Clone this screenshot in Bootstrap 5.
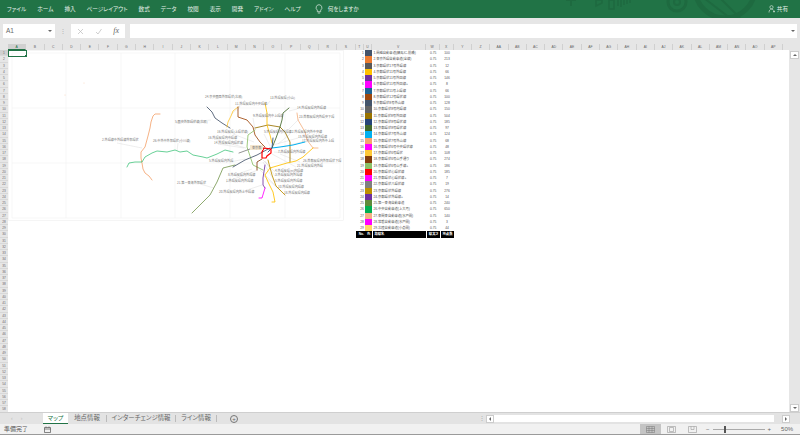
<!DOCTYPE html>
<html lang="ja">
<head>
  <title>Excel マップ</title>
  <meta charset="UTF-8" />
  <meta name="viewport" content="width=device-width, initial-scale=1" />
  <link href="https://cdn.jsdelivr.net/npm/bootstrap@5.3.0/dist/css/bootstrap.min.css" rel="stylesheet" />
  <style>
    html, body { height: 435px; overflow: hidden; }
    body { background: #e6e6e6; font-family: "Liberation Sans", "Noto Sans CJK JP", sans-serif; color: #444; font-feature-settings: "palt"; }
    .xl-app { height: 435px; }

    .xl-ribbon { height: 18px; background: #217346; color: #e4efe8; font-size: 5.6px; padding-left: 7px; gap: 11px; }
    .xl-ribbon span { white-space: nowrap; }
    .xl-bulb { margin-left: 3px; }
    .xl-ask { margin-left: -6px; }
    .xl-deco { left: 540px; top: 0; }
    .xl-share { right: 12px; top: 5px; gap: 1px; font-size: 5.6px; }

    .xl-fbar { height: 26px; padding: 6px 3px 6px 3px; gap: 0; }
    .xl-namebox { width: 52px; height: 14px; background: #fff; font-size: 6.5px; color: #666; padding: 0 3px; }
    .xl-sep { width: 16px; color: #aaa; font-size: 6px; }
    .xl-fbtns { width: 54px; height: 14px; background: #fff; padding: 0 6px; color: #999; }
    .xl-fx { font-family: "Liberation Serif", serif; font-style: italic; font-size: 8px; color: #666; }
    .xl-input { height: 14px; background: #fff; margin-left: 5px; padding-right: 2px; }
    .xl-caret { width: 0; height: 0; border-left: 2px solid transparent; border-right: 2px solid transparent; border-top: 2px solid #666; }

    .xl-colhead { height: 6px; padding-left: 8px; font-size: 3.4px; color: #666; line-height: 6px; }
    .xl-col { text-align: center; flex: none; border-right: 1px solid #d0d0d0; height: 6px; }
    .xl-col-on { background: #d0d0d0; border-bottom: 1px solid #217346; color: #217346; }

    .xl-sheet { height: 362px; overflow: hidden; }
    .xl-rowhead { width: 8px; flex: none; font-size: 3.2px; color: #666; }
    .xl-rownum { height: 6.25px; line-height: 6.25px; text-align: center; border-bottom: 1px solid #d8d8d8; }
    .xl-rownum-on { background: #d0d0d0; }
    .xl-cells { background: #fff; width: 781px; flex: none; }
    .xl-left { width: 348px; flex: none; }
    .xl-map { display: block; width: 336px; height: 172px; }
    .xl-map text { font-size: 3.1px; fill: #777; font-family: "Noto Sans CJK JP", sans-serif; }
    .xl-cursor { left: 0; top: 0; width: 19px; height: 7px; border: 1px solid #217346; }
    .xl-handle { right: -1px; bottom: -1px; width: 2px; height: 2px; background: #217346; }

    .xl-data { font-size: 3.3px; color: #555; width: 98px; flex: none; }
    .xl-line { height: 6.25px; line-height: 6.25px; white-space: nowrap; }
    .xl-no { width: 9px; text-align: right; padding-right: 1px; }
    .xl-swatch { width: 7.5px; height: 6.25px; }
    .xl-name { width: 54px; padding-left: 1px; overflow: hidden; }
    .xl-num { width: 14px; text-align: center; }
    .xl-line-head { background: #000; color: #fff; font-weight: 700; gap: 0; margin-left: 0; }
    .xl-line-head .xl-name, .xl-line-head .xl-num { border-left: 1px solid #fff; }

    .xl-vscroll { width: 11px; flex: none; padding: 1px 1px 0 1px; }
    .xl-vbtn { height: 8px; background: #fff; border: 1px solid #ccc; }
    .xl-up { width: 0; height: 0; border-left: 2px solid transparent; border-right: 2px solid transparent; border-bottom: 2px solid #666; }

    .xl-tabs { height: 12px; font-size: 6.4px; color: #666; background: #e3e3e3; border-top: 1px solid #cfcfcf; }
    .xl-tabnav { width: 43px; flex: none; color: #bbb; font-size: 5px; gap: 8px; padding-left: 11px; }
    .xl-tab { height: 11px; white-space: nowrap; line-height: 10px; text-align: center; flex: none; }
    .xl-tab-a { width: 38px; }
    .xl-tab-b { width: 68px; }
    .xl-tab-c { width: 40px; }
    .xl-tab-div { border-right: 1px solid #bbb; height: 7px; width: 1px; flex: none; }
    .xl-tab-on { background: #fff; color: #217346; border-bottom: 1px solid #217346; width: 25px; font-size: 6px; }
    .xl-plus { width: 8px; height: 8px; border: 1px solid #777; border-radius: 50%; margin-left: 13px; font-size: 6px; line-height: 6px; text-align: center; flex: none; }
    .xl-dots { margin-left: 240px; color: #aaa; font-size: 6px; width: 8px; flex: none; }
    .xl-hbtn { width: 8px; height: 8px; background: #fff; border: 1px solid #ccc; flex: none; }
    .xl-hscroll { height: 7px; background: #fff; width: 280px; flex: none; }
    .xl-left-arrow { width: 0; height: 0; border-top: 2px solid transparent; border-bottom: 2px solid transparent; border-right: 2px solid #666; }
    .xl-right { width: 0; height: 0; border-top: 2px solid transparent; border-bottom: 2px solid transparent; border-left: 2px solid #666; }

    .xl-status { height: 11px; font-size: 6px; color: #555; background: #f1f1f1; border-bottom: 1px solid #9a9a9a; padding-left: 4px; }
    .xl-view { width: 21px; height: 10px; flex: none; }
    .xl-view-on { background: #c4c4c4; margin-left: 589px; }
    .xl-zoomrow { gap: 3px; margin-left: 3px; color: #666; }
    .xl-slider { width: 52px; height: 1px; background: #aaa; flex: none; }
    .xl-thumb { left: 11px; top: -3px; width: 2px; height: 7px; background: #555; }
    .xl-pct { margin-left: 7px; }
  </style>
</head>
<body>
<div class="xl-app d-flex flex-column">

  <div class="xl-ribbon d-flex align-items-center position-relative overflow-hidden">
    <span>ファイル</span><span>ホーム</span><span>挿入</span><span>ページレイアウト</span><span>数式</span><span>データ</span><span>校閲</span><span>表示</span><span>開発</span><span>アドイン</span><span>ヘルプ</span>
    <svg width="8" height="10" viewBox="0 0 8 10" class="xl-bulb"><path d="M4 .7a3 3 0 0 0-1.7 5.4V7.7h3.4V6.1A3 3 0 0 0 4 .7zM2.8 9h2.4" fill="none" stroke="#e4efe8" stroke-width=".7"/></svg>
    <span class="xl-ask">何をしますか</span>
    <svg class="xl-deco position-absolute" width="260" height="18" viewBox="540 0 260 18" fill="none" stroke="#1e6a40">
      <path d="M571 0v6M566 0h10" stroke-width="2"/>
      <path d="M596 0v6l6-3V0zM609 0v9h5V0zM618 0v6M621 0v7M624 0v5M627 0v4M630 0v3" stroke-width="1.6"/>
      <circle cx="677" cy="2" r="9" stroke-width="3"/><circle cx="677" cy="2" r="3" stroke-width="2"/>
      <circle cx="725" cy="-12" r="30" stroke-width="5"/>
      <path d="M700 -5l30 23M712 -10l28 28" stroke-width="2"/>
    </svg>
    <div class="xl-share position-absolute d-flex align-items-center">
      <svg width="8" height="8" viewBox="0 0 8 8"><circle cx="3.5" cy="2.2" r="1.6" fill="none" stroke="#e4efe8" stroke-width=".6"/><path d="M1 7.5c0-2 1-3.4 2.5-3.4 1 0 1.8.5 2.2 1.4M6 5.5v2M5 6.5h2" fill="none" stroke="#e4efe8" stroke-width=".6"/></svg>
      <span>共有</span>
    </div>
  </div>

  <div class="xl-fbar d-flex align-items-center">
    <div class="xl-namebox d-flex align-items-center justify-content-between"><span>A1</span><span class="xl-caret"></span></div>
    <div class="xl-sep text-center">⋮</div>
    <div class="xl-fbtns d-flex align-items-center justify-content-between">
      <svg width="7" height="7" viewBox="0 0 7 7"><path d="M1 1l5 5M6 1L1 6" stroke="#bbb" stroke-width=".7"/></svg>
      <svg width="7" height="7" viewBox="0 0 7 7"><path d="M1 4l2 2 3.500-5" fill="none" stroke="#bbb" stroke-width=".7"/></svg>
      <span class="xl-fx">fx</span>
    </div>
    <div class="xl-input flex-grow-1 d-flex align-items-center justify-content-end"><span class="xl-caret"></span></div>
  </div>

  <div class="xl-colhead d-flex" id="colHead"></div>

  <div class="xl-sheet d-flex">
    <div class="xl-rowhead" id="rowHead"></div>
    <div class="xl-cells d-flex position-relative">
      <div class="xl-left">
        <svg class="xl-map" viewBox="8 50 336 172">
          <g fill="none" stroke="#ececec" stroke-width=".5">
            <rect x="8.500" y="50.500" width="335" height="170"/>
            <path d="M12 53H340V218H12ZM66 53V218M121 53V218M175 53V218M230 53V218M285 53V218M12 108H340M12 163H340"/>
          </g>
          <g fill="none" stroke="#bbb" stroke-width=".25">
            <path d="M176 123l35-3M117 143l25 5M178 143l-1 8M245 100l-13 14M240 106l-3 5M270 101l-3 4M297 109l-8 2M253 118l2 12M299 119l-12 12M233 134l21 8M264 134l6 12M290 134l-12 10M214 139l32 9M298 138l-25 7M218 144l26 4M302 142l-20 5M288 153l-14-1M300 162l-20-8M296 167l-24-13M230 162l15-3M232 176l20-7M226 182l32-12M275 172l-12-12M275 176l-10-15M275 182l-12-20M278 188l-18-18M238 193l24-8M284 194l-20-18M200 184l14 4"/>
          </g>
          <g fill="none" stroke-linecap="round" stroke-linejoin="round" stroke-width=".85">
            <path stroke="#f4a46f" d="M160 114L155 114 153 116 151 122 150 128 148 136 145 147 141 152 141 158 142 163 143 169 145 173 149 176 152 180"/>
            <path stroke="#00b050" stroke-opacity=".7" d="M127 167L129 163 135 162 142 162 145 157 152 153 157 151 167 152 175 150 180 152 187 151 193 155 203 157 207 158 217 154 225 150 233 152"/>
            <path stroke="#44546a" d="M207 107L212 112 215 118 222 123 230 128"/>
            <path stroke="#ffc838" d="M238 107L233 111 231 116 228 122 227 127"/>
            <path stroke="#9e480e" d="M238 107L238 117 247 120 253 127 255 135 260 142 265 147"/>
            <path stroke="#997300" d="M255 128L268 125 280 127 285 132 290 142 290 152 290 162"/>
            <path stroke="#ffc000" d="M265 103L267 113 267 125 270 135 272 143"/>
            <path stroke="#43682b" d="M289 108L283 113 282 120 280 127 276 138 272 148"/>
            <path stroke="#00b0f0" stroke-width="1" d="M272 148L280 147 293 145 305 142"/>
            <path stroke="#264478" d="M273 138L272 148 268 152"/>
            <path stroke="#f4b183" d="M297 113L298 120 305 132 307 140 313 148 318 148"/>
            <path stroke="#ffc000" d="M313 148L303 157 296 161 287 163 270 168 265 175 268 182 273 192 275 202 272 202"/>
            <path stroke="#7030a0" d="M265 165L263 178 263 185 265 188"/>
            <path stroke="#ff00ff" d="M265 188L262 198 259 198"/>
            <path stroke="#8cc168" d="M255 130L248 135 247 147 253 165 263 170"/>
            <path stroke="#7a9a55" d="M235 165L223 168 217 182 210 195 200 205 192 213"/>
            <path stroke="#44546a" d="M233 167L245 160 257 155 270 148"/>
            <path stroke="#7f7f7f" d="M239 153L250 149 262 148 270 149"/>
            <path stroke="#843c0c" d="M257 170L257 162 262 159"/>
            <path stroke="#bf9000" d="M268 160L272 175 276 186 285 195"/>
            <path stroke="#ff0000" stroke-width="1.200" stroke-linejoin="miter" d="M264 148L271 149 271 153 267 156 266 158 262 158 262 152Z"/>
          </g>
          <circle cx="84" cy="83" r=".4" fill="#f4b183"/><circle cx="65" cy="95" r=".4" fill="#f4b183"/>
          <rect x="250" y="145" width="13" height="5" fill="#f3e6cf"/>
          <text x="252" y="148.500">東京都</text>
          <text x="205" y="98">24.京央圏西外郭環状(北部)</text>
          <text x="270" y="99">13.外環反環(小山)</text>
          <text x="235" y="105">11.外環反環内中央環線</text>
          <text x="297" y="109">14.外環反環内外環線</text>
          <text x="253" y="117">9.外環反環内中上環線</text>
          <text x="299" y="118">23.首都反環内外環央下環</text>
          <text x="175" y="123">5.圏央外郭環状線(北部)</text>
          <text x="290" y="133">12.外環反環内外中央線</text>
          <text x="217" y="133">16.外環反環(上環状線)</text>
          <text x="264" y="133">5.外環反環内外環線</text>
          <text x="208" y="139">16.外環反環内中環線</text>
          <text x="298" y="138">15.外環反環内外環線</text>
          <text x="302" y="142">17.外環反環内外中上環</text>
          <text x="214" y="144">14.外環反環内環状線</text>
          <text x="102" y="141">2.外環線中外環線外郭環状</text>
          <text x="153" y="142">26.中外中外郭環状(小川線)</text>
          <text x="278" y="153">7.外環反環内外環線</text>
          <text x="303" y="162">26.首都反環内外郭環状下環</text>
          <text x="297" y="167">21.外環反環内外環</text>
          <text x="209" y="162">5.外環反環内外環</text>
          <text x="275" y="172">4.外環反環(n)内環線</text>
          <text x="228" y="176">8.外環反環内外環線</text>
          <text x="275" y="176">3.外環反環内外環線</text>
          <text x="226" y="182">1.外環反環内外環線</text>
          <text x="275" y="182">5.外環反環内外環線</text>
          <text x="278" y="188">10.外環反環内環線</text>
          <text x="219" y="193">20.外環反環内外上中環線</text>
          <text x="284" y="194">18.外環反環内環線</text>
          <text x="177" y="184">21.第一東海外郭環状</text>
        </svg>
      </div>
      <div class="xl-data" id="dataTable"></div>
      <div class="xl-cursor position-absolute"><div class="xl-handle position-absolute"></div></div>
    </div>
    <div class="xl-vscroll d-flex flex-column justify-content-between">
      <div class="xl-vbtn d-flex align-items-center justify-content-center"><span class="xl-up"></span></div>
      <div class="xl-vbtn d-flex align-items-center justify-content-center"><span class="xl-caret"></span></div>
    </div>
  </div>

  <div class="xl-tabs d-flex align-items-center">
    <div class="xl-tabnav d-flex"><span>‹</span><span>›</span></div>
    <div class="xl-tab xl-tab-on">マップ</div>
    <div class="xl-tab xl-tab-a">地点情報</div><div class="xl-tab-div"></div>
    <div class="xl-tab xl-tab-b">インターチェンジ情報</div><div class="xl-tab-div"></div>
    <div class="xl-tab xl-tab-c">ライン情報</div><div class="xl-tab-div"></div>
    <div class="xl-plus">+</div>
    <div class="xl-dots text-center">⋮</div>
    <div class="xl-hbtn d-flex align-items-center justify-content-center"><span class="xl-left-arrow"></span></div>
    <div class="xl-hscroll"></div>
    <div class="xl-hbtn ms-2 d-flex align-items-center justify-content-center"><span class="xl-right"></span></div>
  </div>

  <div class="xl-status d-flex align-items-center">
    <span>準備完了</span>
    <svg width="7" height="7" viewBox="0 0 7 7" class="ms-3"><path d="M.5 1.500h6v5h-6zM.5 3h6M2 .5v1M5 .5v1" fill="none" stroke="#555" stroke-width=".7"/></svg>
    <div class="xl-view xl-view-on d-flex align-items-center justify-content-center">
      <svg width="9" height="7" viewBox="0 0 9 7"><path d="M.5.500h8v6h-8zM.5 2.500h8M.5 4.500h8M3 .5v6M6 .5v6" fill="none" stroke="#777" stroke-width=".5"/></svg>
    </div>
    <div class="xl-view d-flex align-items-center justify-content-center">
      <svg width="9" height="7" viewBox="0 0 9 7"><path d="M.5.500h8v6h-8zM2.500 1.500h4v4h-4z" fill="none" stroke="#888" stroke-width=".5"/></svg>
    </div>
    <div class="xl-view d-flex align-items-center justify-content-center">
      <svg width="9" height="7" viewBox="0 0 9 7"><path d="M.5.500h8v6h-8zM3 .5v3h3v-3" fill="none" stroke="#888" stroke-width=".5"/></svg>
    </div>
    <div class="xl-zoomrow d-flex align-items-center">
      <span>−</span>
      <div class="xl-slider position-relative"><div class="xl-thumb position-absolute"></div></div>
      <span>+</span>
      <span class="xl-pct">50%</span>
    </div>
  </div>
</div>

<script>
  // column headers: A-S, the narrow table columns, then the rest up to AP
  const letters = "ABCDEFGHIJKLMNOPQRS".split("");
  const cols = letters.map(c => [c, 18.3]);
  cols.push(["T", 8.5], ["U", 7.5], ["V", 54], ["W", 14], ["X", 14], ["Y", 18.3], ["Z", 18.3]);
  "ABCDEFGHIJKLMNOP".split("").forEach(c => cols.push(["A" + c, 18.3]));
  const colHead = document.getElementById("colHead");
  cols.forEach((c, i) => {
    colHead.innerHTML += `<div class="xl-col ${i === 0 ? "xl-col-on" : ""}" style="width:${c[1]}px">${c[0]}</div>`;
  });

  const rowHead = document.getElementById("rowHead");
  for (let i = 1; i <= 58; i++) {
    rowHead.innerHTML += `<div class="xl-rownum ${i === 1 ? "xl-rownum-on" : ""}">${i}</div>`;
  }

  const rows = [
    ["#44546a", "1.関越自動車道(練馬IC-前橋)", 100], ["#ed7d31", "2.東京外環自動車道(全線)", 213],
    ["#595959", "3.京都環状17号外環線", 12], ["#ffc000", "4.京都環状11号外環線", 66],
    ["#7030a0", "5.京都環状11号外回線", 146], ["#ff00ff", "6.京都環状11号外回線+", 8],
    ["#1f6391", "7.京都環状11号上環線", 66], ["#9e480e", "8.京都環状12号環状線", 100],
    ["#44546a", "9.京都環状8号外山線", 128], ["#636363", "10.京都環状8号内環線", 150],
    ["#997300", "11.京都環状8号外回線", 504], ["#264478", "12.京都環状8号環状線", 185],
    ["#43682b", "13.京都環状8号環状線", 97], ["#00b0f0", "14.京都環状7号外山線", 124],
    ["#f4a46f", "15.京都環状7号外山線", 68], ["#ff00ff", "16.京都環状6号中央環状線", 48],
    ["#ffc838", "17.京都環状6号環状", 108], ["#843c0c", "18.京都環状6号山手通り", 274],
    ["#8cc168", "19.京都環状6号山手線+", 186], ["#ff0000", "20.京都環状心環状線", 185],
    ["#ff00ff", "21.京都環状心環状線+", 7], ["#7f7f7f", "22.京都環状八環状線", 19],
    ["#bf9000", "23.京都環状外環線", 276], ["#7030a0", "24.京都環状外環線+", 14],
    ["#5f8a3a", "25.第一東海自動車道", 240], ["#00b050", "26.中央自動車道(上大月)", 650],
    ["#f4b183", "27.東関東自動車道(水戸間)", 140], ["#ff00ff", "28.常磐自動車道(水戸間)", 3],
    ["#ffd966", "29.北陸自動車道(小倉間)", 44]
  ];
  const dataTable = document.getElementById("dataTable");
  rows.forEach((r, i) => {
    dataTable.innerHTML += `
      <div class="xl-line d-flex">
        <div class="xl-no">${i + 1}</div>
        <div class="xl-swatch" style="background:${r[0]}"></div>
        <div class="xl-name">${r[1]}</div>
        <div class="xl-num">0.75</div>
        <div class="xl-num">${r[2]}</div>
      </div>`;
  });
  dataTable.innerHTML += `
    <div class="xl-line xl-line-head d-flex">
      <div class="xl-no">No.</div>
      <div class="xl-swatch text-center">色</div>
      <div class="xl-name">路線名</div>
      <div class="xl-num">線太さ</div>
      <div class="xl-num">地点数</div>
    </div>`;
</script>
<script src="https://cdn.jsdelivr.net/npm/bootstrap@5.3.0/dist/js/bootstrap.bundle.min.js"></script>
</body>
</html>
